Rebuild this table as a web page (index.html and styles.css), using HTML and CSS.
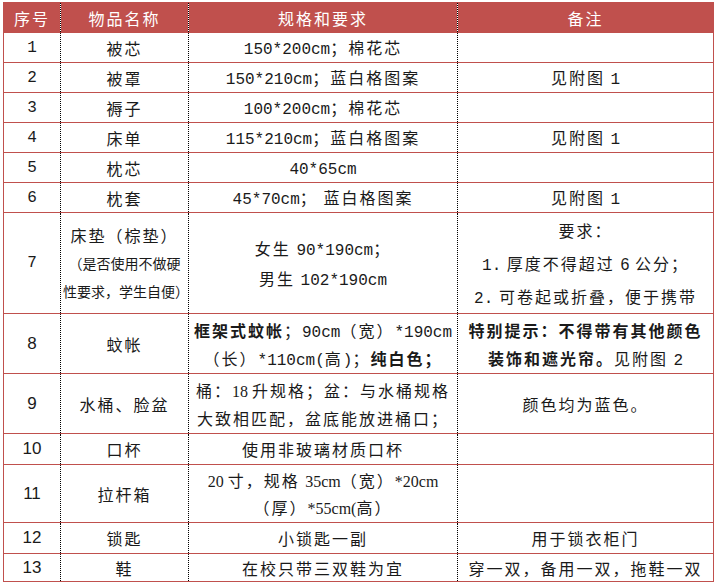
FILE: index.html
```html
<!DOCTYPE html>
<html lang="zh-CN">
<head>
<meta charset="utf-8">
<title>物品清单</title>
<link rel="stylesheet" href="styles.css">
</head>
<body>
<div class="page">
<table class="list">
  <colgroup>
    <col class="c1"><col class="c2"><col class="c3"><col class="c4">
  </colgroup>
  <thead>
    <tr class="h30 head">
      <th>序号</th><th>物品名称</th><th>规格和要求</th><th>备注</th>
    </tr>
  </thead>
  <tbody>
    <tr class="h30">
      <td class="n">1</td><td>被芯</td><td><span class="m">150*200cm</span>；棉花芯</td><td></td>
    </tr>
    <tr class="h30">
      <td class="n">2</td><td>被罩</td><td><span class="m">150*210cm</span>；蓝白格图案</td><td>见附图 <span class="m">1</span></td>
    </tr>
    <tr class="h30">
      <td class="n">3</td><td>褥子</td><td><span class="m">100*200cm</span>；棉花芯</td><td></td>
    </tr>
    <tr class="h30">
      <td class="n">4</td><td>床单</td><td><span class="m">115*210cm</span>；蓝白格图案</td><td>见附图 <span class="m">1</span></td>
    </tr>
    <tr class="h30">
      <td class="n">5</td><td>枕芯</td><td><span class="m">40*65cm</span></td><td></td>
    </tr>
    <tr class="h30">
      <td class="n">6</td><td>枕套</td><td><span class="m">45*70cm</span>；&nbsp;蓝白格图案</td><td>见附图 <span class="m">1</span></td>
    </tr>
    <tr class="h101">
      <td class="n">7</td>
      <td class="tall">
        <div class="ln">床垫（棕垫）</div>
        <div class="ln small">（是否使用不做硬</div>
        <div class="ln small">性要求，学生自便）</div>
      </td>
      <td class="tall">
        <div class="ln l30">女生 <span class="m">90*190cm</span>；</div>
        <div class="ln l30">男生 <span class="m">102*190cm</span></div>
      </td>
      <td class="tall">
        <div class="ln l33">要求：</div>
        <div class="ln l33"><span class="m">1.</span> 厚度不得超过 <span class="s">6</span> 公分；</div>
        <div class="ln l33"><span class="m">2.</span> 可卷起或折叠，便于携带</div>
      </td>
    </tr>
    <tr class="h60">
      <td class="n s">8</td><td>蚊帐</td>
      <td class="tall"><div class="ln"><b>框架式蚊帐</b>；<span class="m">90cm</span>（宽）<span class="m">*190cm</span></div><div class="ln">（长）<span class="m">*110cm(</span>高<span class="m">)</span>；<b>纯白色；</b></div></td>
      <td class="tall"><div class="ln"><b>特别提示：不得带有其他颜色</b></div><div class="ln"><b>装饰和遮光帘。</b>见附图 <span class="m">2</span></div></td>
    </tr>
    <tr class="h60">
      <td class="n s">9</td><td>水桶、脸盆</td>
      <td class="tall"><div class="ln">桶：<span class="t">18 </span>升规格；盆：与水桶规格</div><div class="ln">大致相匹配，盆底能放进桶口；</div></td>
      <td>颜色均为蓝色。</td>
    </tr>
    <tr class="h31">
      <td class="n s">10</td><td>口杯</td><td>使用非玻璃材质口杯</td><td></td>
    </tr>
    <tr class="h58">
      <td class="n s">11</td><td>拉杆箱</td>
      <td class="tall"><div class="ln l27"><span class="t">20 </span>寸，规格 <span class="t">35cm</span>（宽）<span class="t">*20cm</span></div><div class="ln l27">（厚）<span class="t">*55cm(</span>高）</div></td>
      <td></td>
    </tr>
    <tr class="h31">
      <td class="n s">12</td><td>锁匙</td><td>小锁匙一副</td><td>用于锁衣柜门</td>
    </tr>
    <tr class="h28">
      <td class="n s">13</td><td>鞋</td><td>在校只带三双鞋为宜</td><td>穿一双，备用一双，拖鞋一双</td>
    </tr>
  </tbody>
</table>
</div>
</body>
</html>
```

FILE: styles.css
```css
html, body {
  margin: 0;
  padding: 0;
  background: #ffffff;
}

.page {
  padding: 2px 0 0 3px;
}

.list {
  border-collapse: collapse;
  table-layout: fixed;
  width: 710px;
  font-family: "Noto Sans CJK SC", "Liberation Serif", serif;
  font-size: 16px;
  color: #1a1a1a;
  letter-spacing: 2px;
  border-left: 1px solid #c0504d;
  border-right: 1px solid #c0504d;
}

.c1 { width: 57px; }
.c2 { width: 128px; }
.c3 { width: 269px; }
.c4 { width: 256px; }

.list th,
.list td {
  padding: 0 2px;
  text-align: center;
  vertical-align: middle;
  border-top: 1px solid #c0504d;
  border-bottom: 1px solid #c0504d;
  border-left: 1px dotted #000000;
  border-right: 1px dotted #000000;
  line-height: 18px;
  white-space: nowrap;
  overflow: hidden;
}

.list th:first-child,
.list td:first-child {
  border-left: 1px solid #c0504d;
}

.list th:last-child,
.list td:last-child {
  border-right: 1px solid #c0504d;
}

.head th {
  background: #c0504d;
  color: #ffffff;
  font-weight: 400;
  font-size: 16px;
}

.h30 { height: 30px; }
.h31 { height: 31px; }
.h28 { height: 28px; }
.h58 { height: 58px; }
.h60 { height: 60px; }
.h101 { height: 101px; }

.ln {
  line-height: 28px;
  height: 28px;
}

.l27 { line-height: 27px; height: 27px; }
.l30 { line-height: 30px; height: 30px; }
.l33 { line-height: 33px; height: 33px; }

.small {
  font-size: 14px;
  letter-spacing: 0;
}

.m,
.t,
.s,
b {
  line-height: 16px;
}

.m {
  font-family: "Liberation Mono", monospace;
  letter-spacing: 0;
}

.t {
  font-family: "Liberation Serif", serif;
  letter-spacing: 0;
}

.s {
  font-family: "Liberation Sans", sans-serif;
  letter-spacing: 0;
}

.n {
  font-family: "Liberation Mono", monospace;
  letter-spacing: 0;
}

.n.s {
  font-family: "Liberation Sans", sans-serif;
  font-size: 17px;
}

b {
  font-weight: 700;
}
```
